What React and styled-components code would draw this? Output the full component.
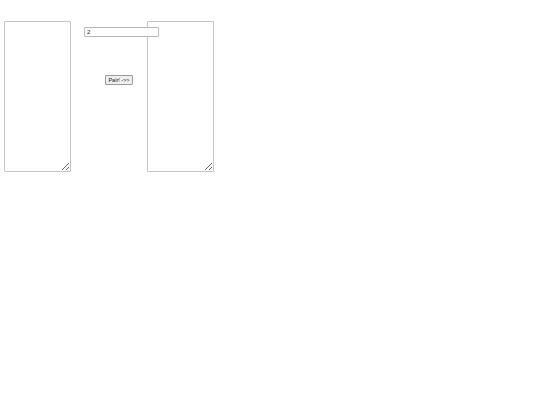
import React from "react";
import styled, { createGlobalStyle } from "styled-components";

const Global = createGlobalStyle`
  html, body { margin: 0; padding: 0; background: #fff; }
  body { font-family: "Liberation Sans", Arial, sans-serif; }
`;

const Page = styled.div`
  display: flex;
  align-items: flex-start;
  padding: 21px 0 0 4px;
`;

const Area = styled.textarea`
  box-sizing: border-box;
  width: 67px;
  height: 151px;
  margin: 0;
  padding: 1px;
  border: 1px solid #c4c4c4;
  border-radius: 1px;
  background: #fff;
  font-size: 5px;
  font-family: "Liberation Mono", monospace;
  resize: both;
  display: block;
`;

const Middle = styled.div`
  width: 76px;
  display: flex;
  flex-direction: column;
  align-items: flex-start;
  padding-top: 6px;
`;

const CountInput = styled.input`
  position: relative;
  z-index: 1;
  box-sizing: border-box;
  width: 75px;
  height: 10px;
  margin: 0 0 0 13px;
  padding: 0 2px;
  border: 1px solid #b8b8b8;
  border-radius: 1px;
  background: #fff;
  font-family: "Liberation Sans", Arial, sans-serif;
  font-size: 6px;
  line-height: 8px;
  color: #222;
  outline: none;
`;

const PairButton = styled.button`
  box-sizing: border-box;
  width: 28px;
  height: 10px;
  margin: 38px 0 0 34px;
  padding: 0;
  border: 1px solid #9a9a9a;
  border-radius: 1px;
  background: #efefef;
  font-family: "Liberation Sans", Arial, sans-serif;
  font-size: 5.5px;
  line-height: 8px;
  color: #111;
  white-space: nowrap;
`;

export default function App() {
  return (
    <>
      <Global />
      <Page>
        <Area />
        <Middle>
          <CountInput defaultValue="2" />
          <PairButton>Pair! -&gt;&gt;</PairButton>
        </Middle>
        <Area />
      </Page>
    </>
  );
}
